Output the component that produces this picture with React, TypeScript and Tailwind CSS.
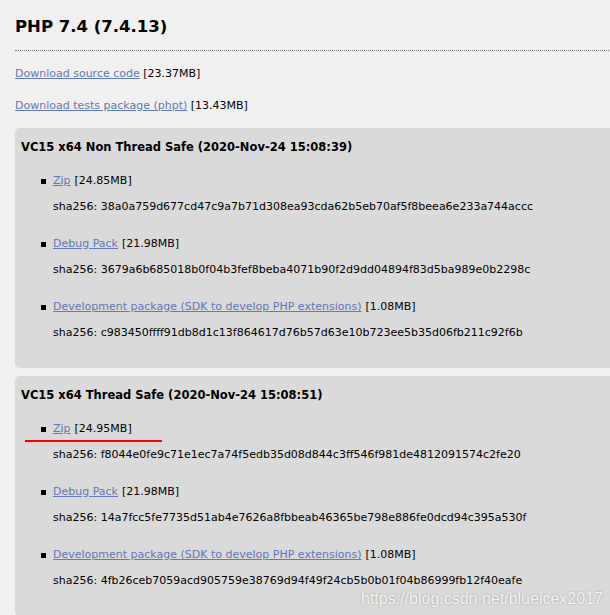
import React from 'react';

type Item = { label: string; size: string; sha: string };
type Build = { title: string; items: Item[] };

const builds: Build[] = [
  {
    title: 'VC15 x64 Non Thread Safe (2020-Nov-24 15:08:39)',
    items: [
      { label: 'Zip', size: '[24.85MB]', sha: '38a0a759d677cd47c9a7b71d308ea93cda62b5eb70af5f8beea6e233a744accc' },
      { label: 'Debug Pack', size: '[21.98MB]', sha: '3679a6b685018b0f04b3fef8beba4071b90f2d9dd04894f83d5ba989e0b2298c' },
      {
        label: 'Development package (SDK to develop PHP extensions)',
        size: '[1.08MB]',
        sha: 'c983450ffff91db8d1c13f864617d76b57d63e10b723ee5b35d06fb211c92f6b',
      },
    ],
  },
  {
    title: 'VC15 x64 Thread Safe (2020-Nov-24 15:08:51)',
    items: [
      { label: 'Zip', size: '[24.95MB]', sha: 'f8044e0fe9c71e1ec7a74f5edb35d08d844c3ff546f981de4812091574c2fe20' },
      { label: 'Debug Pack', size: '[21.98MB]', sha: '14a7fcc5fe7735d51ab4e7626a8fbbeab46365be798e886fe0dcd94c395a530f' },
      {
        label: 'Development package (SDK to develop PHP extensions)',
        size: '[1.08MB]',
        sha: '4fb26ceb7059acd905759e38769d94f49f24cb5b0b01f04b86999fb12f40eafe',
      },
    ],
  },
];

function BuildBox({ build, marked }: { build: Build; marked?: boolean }) {
  return (
    <div className="w-[620px] rounded-[5px] bg-[#dadada] pl-[6px] pt-[11px] pb-[27px]">
      <h4 className="text-[11.5px] font-bold leading-4 text-black">{build.title}</h4>
      <ul className="pl-[20px]">
        {build.items.map((item, i) => (
          <li key={item.label} className={i === 0 ? 'mt-[18px]' : 'mt-[21px]'}>
            <div className="relative flex items-center leading-4">
              <span className="mr-[7px] h-[5px] w-[5px] bg-black" />
              <a href="#" className="text-[#6277b8] underline">
                {item.label}
              </a>
              <span className="ml-[4px]">{item.size}</span>
              {marked && i === 0 && (
                <span className="absolute left-[-16px] top-[19px] h-[2px] w-[137px] bg-[#ff0000]" />
              )}
            </div>
            <p className="mt-[10px] pl-[12px] leading-4">sha256: {item.sha}</p>
          </li>
        ))}
      </ul>
    </div>
  );
}

export default function App() {
  return (
    <div
      className="relative h-[615px] w-[610px] overflow-hidden bg-[#f0f0f0] pl-[15px] text-[11px] text-black"
      style={{ fontFamily: '"DejaVu Sans", Verdana, sans-serif' }}
    >
      <div className="w-[620px] border-b border-dotted border-[#777] pt-[17px] pb-[13px]">
        <h3 className="text-[16.5px] font-bold leading-5">PHP 7.4 (7.4.13)</h3>
      </div>
      <p className="mt-[15px] leading-4">
        <a href="#" className="text-[#6277b8] underline">
          Download source code
        </a>{' '}
        [23.37MB]
      </p>
      <p className="mt-4 leading-4">
        <a href="#" className="text-[#6277b8] underline">
          Download tests package (phpt)
        </a>{' '}
        [13.43MB]
      </p>
      <div className="mt-[14px] flex flex-col gap-2">
        {builds.map((b, i) => (
          <BuildBox key={b.title} build={b} marked={i === 1} />
        ))}
      </div>
      <span
        className="absolute left-[361px] top-[587px] text-[16px] text-[#f4f4f4]"
        style={{ fontFamily: '"Liberation Sans", Arial, sans-serif', textShadow: '0 0 2px #9a9a9a' }}
      >
        https://blog.csdn.net/blueicex2017
      </span>
    </div>
  );
}
